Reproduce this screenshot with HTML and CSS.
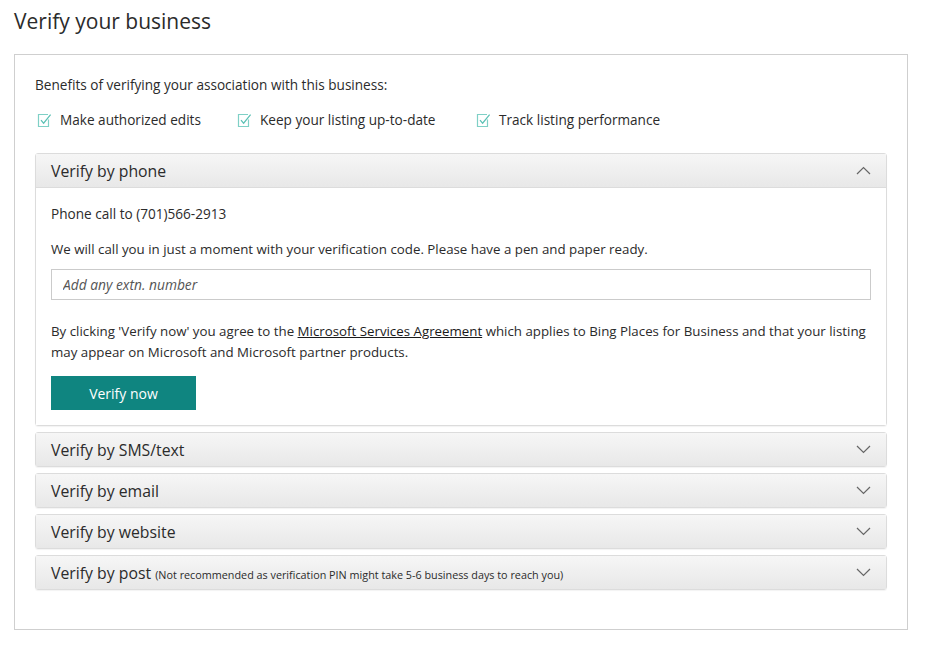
FILE: index.html
```html
<!DOCTYPE html>
<html lang="en">

<head>
    <meta charset="UTF-8">
    <meta name="viewport" content="width=device-width, initial-scale=1.0">
    <title>Verify your business</title>
    <link rel="stylesheet" href="styles.css">
</head>

<body>
    <div id="page">
        <h1 class="page-title">Verify your business</h1>

        <div class="verify-box">
            <p class="benefits-title">Benefits of verifying your association with this business:</p>
            <ul class="benefits">
                <li>
                    <svg class="check" width="15" height="15" viewBox="0 0 15 15"><path d="M11.5 6.5V13.5H1.5V1.5H11" fill="none" stroke="#7fd0c6" stroke-width="1.2"/><path d="M4 7.2L6.6 10.2L13.6 1.6" fill="none" stroke="#5cc1b5" stroke-width="1.2"/></svg>
                    Make authorized edits
                </li>
                <li>
                    <svg class="check" width="15" height="15" viewBox="0 0 15 15"><path d="M11.5 6.5V13.5H1.5V1.5H11" fill="none" stroke="#7fd0c6" stroke-width="1.2"/><path d="M4 7.2L6.6 10.2L13.6 1.6" fill="none" stroke="#5cc1b5" stroke-width="1.2"/></svg>
                    Keep your listing up-to-date
                </li>
                <li>
                    <svg class="check" width="15" height="15" viewBox="0 0 15 15"><path d="M11.5 6.5V13.5H1.5V1.5H11" fill="none" stroke="#7fd0c6" stroke-width="1.2"/><path d="M4 7.2L6.6 10.2L13.6 1.6" fill="none" stroke="#5cc1b5" stroke-width="1.2"/></svg>
                    Track listing performance
                </li>
            </ul>

            <div class="panel open">
                <div class="panel-head">
                    <span class="panel-title">Verify by phone</span>
                    <svg class="chevron" width="15" height="9" viewBox="0 0 15 9"><path d="M1 8L7.5 1.5L14 8" fill="none" stroke="#666" stroke-width="1.2"/></svg>
                </div>
                <div class="panel-body">
                    <p class="phone-line">Phone call to (701)566-2913</p>
                    <p class="note">We will call you in just a moment with your verification code. Please have a pen and paper ready.</p>
                    <input class="extn" type="text" placeholder="Add any extn. number">
                    <p class="agreement">By clicking 'Verify now' you agree to the <a href="#">Microsoft Services Agreement</a> which applies to Bing Places for Business and that your listing may appear on Microsoft and Microsoft partner products.</p>
                    <button class="verify-button">Verify now</button>
                </div>
            </div>

            <div class="panel">
                <div class="panel-head">
                    <span class="panel-title">Verify by SMS/text</span>
                    <svg class="chevron" width="15" height="9" viewBox="0 0 15 9"><path d="M1 1L7.5 7.5L14 1" fill="none" stroke="#666" stroke-width="1.2"/></svg>
                </div>
            </div>
            <div class="panel">
                <div class="panel-head">
                    <span class="panel-title">Verify by email</span>
                    <svg class="chevron" width="15" height="9" viewBox="0 0 15 9"><path d="M1 1L7.5 7.5L14 1" fill="none" stroke="#666" stroke-width="1.2"/></svg>
                </div>
            </div>
            <div class="panel">
                <div class="panel-head">
                    <span class="panel-title">Verify by website</span>
                    <svg class="chevron" width="15" height="9" viewBox="0 0 15 9"><path d="M1 1L7.5 7.5L14 1" fill="none" stroke="#666" stroke-width="1.2"/></svg>
                </div>
            </div>
            <div class="panel">
                <div class="panel-head">
                    <span class="panel-title">Verify by post <small>(Not recommended as verification PIN might take 5-6 business days to reach you)</small></span>
                    <svg class="chevron" width="15" height="9" viewBox="0 0 15 9"><path d="M1 1L7.5 7.5L14 1" fill="none" stroke="#666" stroke-width="1.2"/></svg>
                </div>
            </div>
        </div>
    </div>
</body>

</html>
```

FILE: styles.css
```css
* {
    margin: 0;
    padding: 0;
    box-sizing: border-box;
}

body {
    font-family: "Open Sans", "Noto Sans", "Liberation Sans", sans-serif;
    color: #2b2b2b;
    background-color: #fff;
}

#page {
    width: 894px;
    margin-left: 14px;
    padding-top: 6px;
}

.page-title {
    font-size: 21px;
    font-weight: 400;
    line-height: 30px;
    height: 48px;
    color: #2b2b2b;
}

.verify-box {
    border: 1px solid #cfcfcf;
    padding: 21px 20px 33px 20px;
}

.benefits-title {
    font-size: 13.6px;
    line-height: 18px;
    margin-bottom: 17px;
}

.benefits {
    list-style: none;
    display: flex;
    font-size: 13.6px;
    line-height: 18px;
    margin-bottom: 24px;
}

.benefits li {
    display: flex;
    align-items: center;
    margin-left: 2px;
}

.benefits li:nth-child(1) {
    width: 198px;
}

.benefits li:nth-child(2) {
    width: 237px;
}

.check {
    margin-right: 8px;
    flex: none;
}

.panel {
    margin-bottom: 6px;
    border: 1px solid #dcdcdc;
    border-radius: 3px;
    box-shadow: 0 1px 1px rgba(0, 0, 0, 0.05);
}

.panel-head {
    height: 33px;
    display: flex;
    align-items: center;
    justify-content: space-between;
    padding: 0 15px 0 15px;
    background: linear-gradient(#f6f6f6, #e8e8e8);
}

.panel-title {
    font-size: 15.8px;
    color: #2b2b2b;
}

.panel-title small {
    font-size: 10.8px;
}

.panel.open .panel-head {
    height: 34px;
    border-bottom: 1px solid #dcdcdc;
}

.panel-body {
    padding: 15px 15px 15px 15px;
    background-color: #fff;
    font-size: 13.3px;
    line-height: 21px;
}

.phone-line {
    font-size: 13.6px;
    margin-bottom: 15px;
}

.note {
    margin-bottom: 9px;
}

.extn {
    display: block;
    width: 100%;
    height: 31px;
    border: 1px solid #cbcbcb;
    padding: 0 11px;
    font-family: inherit;
    font-size: 13.8px;
    outline: none;
    margin-bottom: 21px;
}

.extn::placeholder {
    color: #555;
    font-style: italic;
}

.agreement {
    margin-bottom: 13px;
}

.agreement a {
    color: #1a1a1a;
    text-decoration: underline;
}

.verify-button {
    width: 145px;
    height: 34px;
    border: none;
    background-color: #0f8580;
    color: #fff;
    font-family: inherit;
    font-size: 14px;
}
```
